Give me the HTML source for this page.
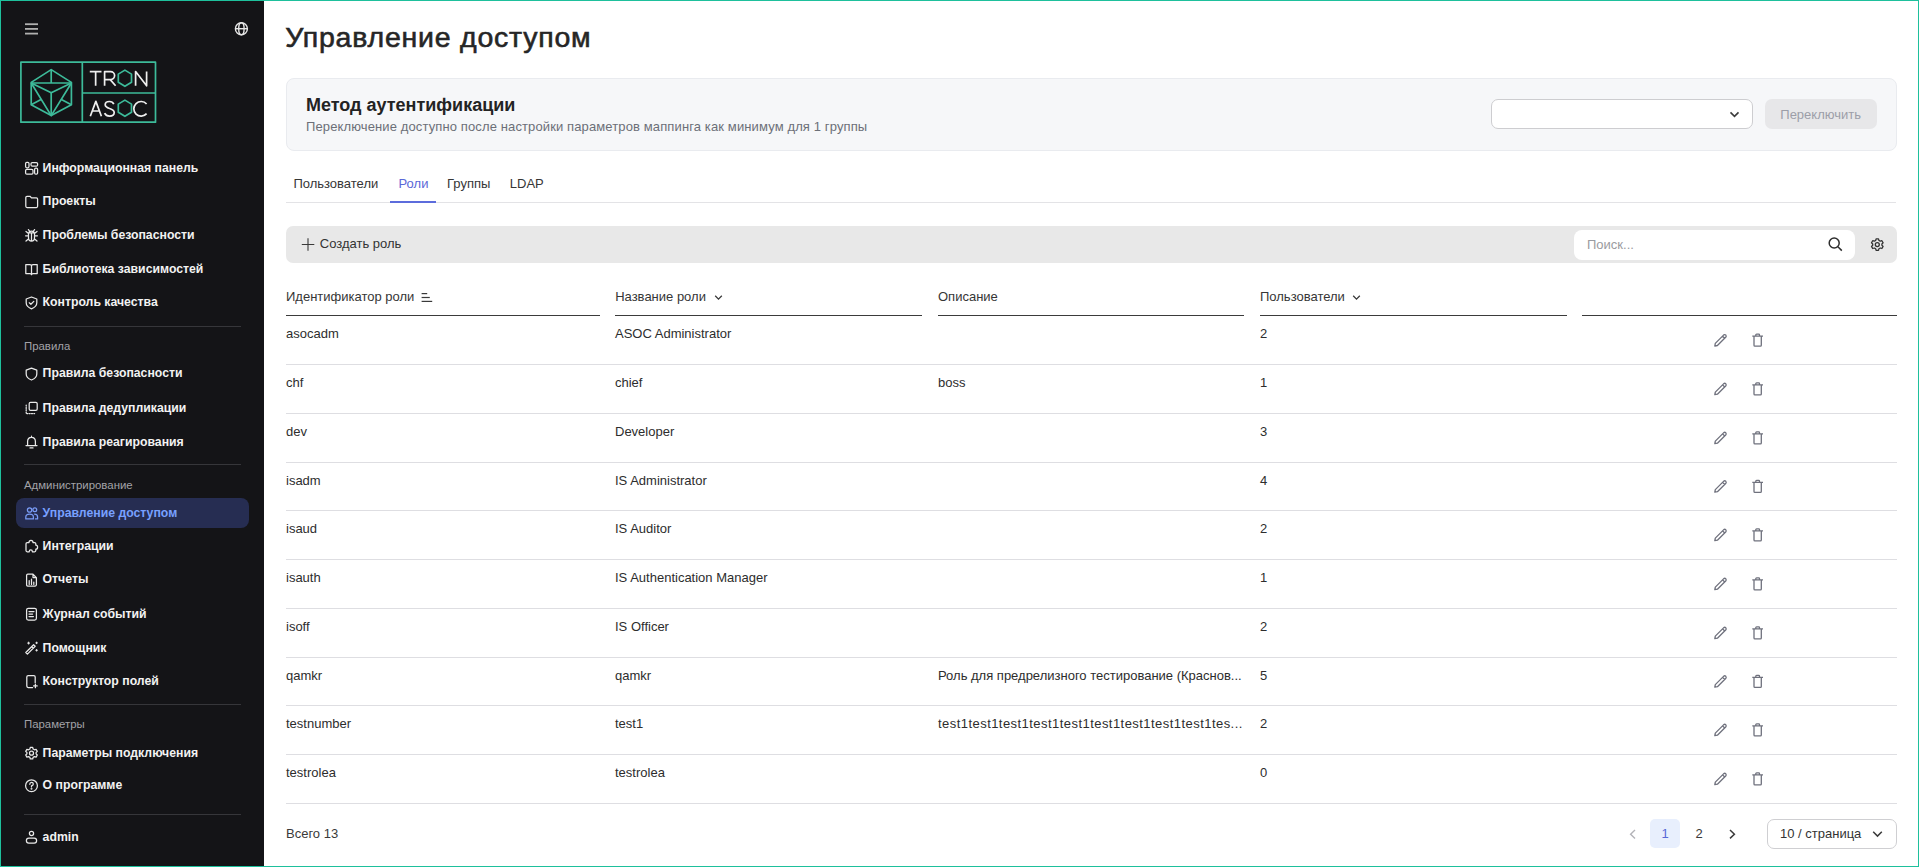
<!DOCTYPE html><html><head><meta charset="utf-8"><title>Управление доступом</title><style>
*{margin:0;padding:0;box-sizing:border-box}
html,body{width:1919px;height:867px;overflow:hidden;background:#fff;font-family:"Liberation Sans", sans-serif}
.t{position:absolute;white-space:nowrap;line-height:1}
.a{position:absolute}
svg.o{position:absolute;left:0;top:0;overflow:visible}
</style></head><body>
<div class="a" style="left:0;top:0;width:264px;height:867px;background:#141417"></div>
<div class="a" style="left:16px;top:498px;width:233px;height:30px;border-radius:8px;background:#262d52"></div>
<div class="a" style="left:24px;top:326px;width:217px;height:1px;background:#36363a"></div>
<div class="a" style="left:24px;top:464px;width:217px;height:1px;background:#36363a"></div>
<div class="a" style="left:24px;top:704px;width:217px;height:1px;background:#36363a"></div>
<div class="a" style="left:24px;top:814px;width:217px;height:1px;background:#36363a"></div>
<div class="t" style="left:24px;top:340.55px;font-size:11.4px;color:#a3a3a8;font-weight:normal;">Правила</div>
<div class="t" style="left:24px;top:479.65px;font-size:11.4px;color:#a3a3a8;font-weight:normal;">Администрирование</div>
<div class="t" style="left:24px;top:719.15px;font-size:11.4px;color:#a3a3a8;font-weight:normal;">Параметры</div>
<div class="t" style="left:42.6px;top:161.83px;font-size:12.25px;color:#f2f2f2;font-weight:bold;">Информационная панель</div>
<div class="t" style="left:42.6px;top:195.33px;font-size:12.25px;color:#f2f2f2;font-weight:bold;">Проекты</div>
<div class="t" style="left:42.6px;top:228.83px;font-size:12.25px;color:#f2f2f2;font-weight:bold;">Проблемы безопасности</div>
<div class="t" style="left:42.6px;top:262.53px;font-size:12.25px;color:#f2f2f2;font-weight:bold;">Библиотека зависимостей</div>
<div class="t" style="left:42.6px;top:296.23px;font-size:12.25px;color:#f2f2f2;font-weight:bold;">Контроль качества</div>
<div class="t" style="left:42.6px;top:367.43px;font-size:12.25px;color:#f2f2f2;font-weight:bold;">Правила безопасности</div>
<div class="t" style="left:42.6px;top:401.63px;font-size:12.25px;color:#f2f2f2;font-weight:bold;">Правила дедупликации</div>
<div class="t" style="left:42.6px;top:435.63px;font-size:12.25px;color:#f2f2f2;font-weight:bold;">Правила реагирования</div>
<div class="t" style="left:42.6px;top:506.83px;font-size:12.25px;color:#78a0ff;font-weight:bold;">Управление доступом</div>
<div class="t" style="left:42.6px;top:539.63px;font-size:12.25px;color:#f2f2f2;font-weight:bold;">Интеграции</div>
<div class="t" style="left:42.6px;top:573.43px;font-size:12.25px;color:#f2f2f2;font-weight:bold;">Отчеты</div>
<div class="t" style="left:42.6px;top:607.53px;font-size:12.25px;color:#f2f2f2;font-weight:bold;">Журнал событий</div>
<div class="t" style="left:42.6px;top:641.53px;font-size:12.25px;color:#f2f2f2;font-weight:bold;">Помощник</div>
<div class="t" style="left:42.6px;top:674.93px;font-size:12.25px;color:#f2f2f2;font-weight:bold;">Конструктор полей</div>
<div class="t" style="left:42.6px;top:746.63px;font-size:12.25px;color:#f2f2f2;font-weight:bold;">Параметры подключения</div>
<div class="t" style="left:42.6px;top:779.13px;font-size:12.25px;color:#f2f2f2;font-weight:bold;">О программе</div>
<div class="t" style="left:42.6px;top:830.83px;font-size:12.25px;color:#f2f2f2;font-weight:bold;">admin</div>
<svg class="o" width="1" height="1"><g stroke="#b0b0b0" stroke-width="1.8"><line x1="25" y1="24.2" x2="38" y2="24.2"/><line x1="25" y1="28.9" x2="38" y2="28.9"/><line x1="25" y1="33.6" x2="38" y2="33.6"/></g><g stroke="#e6e6e6" stroke-width="1.4" fill="none"><circle cx="241.4" cy="28.7" r="6"/><ellipse cx="241.4" cy="28.7" rx="2.7" ry="6"/><line x1="235.4" y1="28.7" x2="247.4" y2="28.7"/></g><g stroke="#3dbb9a" stroke-width="1.7" fill="none" stroke-linejoin="round">
<rect x="20.9" y="62.2" width="134.6" height="60"/>
<line x1="82.3" y1="62.2" x2="82.3" y2="122.2"/>
<line x1="82.3" y1="93" x2="155.5" y2="93"/>
<polygon points="51.2,69.6 71.4,82.4 71.4,104.8 51.2,115.6 31.2,104.8 31.2,82.4"/>
<line x1="51.2" y1="69.6" x2="51.2" y2="83"/>
<line x1="31.2" y1="83" x2="71.4" y2="83"/>
<polyline points="31.2,83 51.2,92.8 71.4,83"/>
<line x1="51.2" y1="92.8" x2="51.2" y2="115.6"/>
<polyline points="31.2,83 51.2,115.6 71.4,83"/>
<line x1="31.2" y1="104.8" x2="41" y2="99.4"/>
<line x1="71.4" y1="104.8" x2="61.4" y2="99.4"/>
<polygon points="124.9,70.10000000000001 131.5,74.15 131.5,82.25 124.9,86.3 118.30000000000001,82.25 118.30000000000001,74.15"/>
<polygon points="124.9,100.10000000000001 131.5,104.15 131.5,112.25 124.9,116.3 118.30000000000001,112.25 118.30000000000001,104.15"/>
</g>
<g stroke="#efefef" stroke-width="1.7" fill="none" stroke-linejoin="round">
<path d="M89.8,71.6 H101.5 M95.65,71.6 V85.8"/>
<path d="M104.6,85.8 V71.6 H110.6 A4,4 0 0 1 110.6,79.6 H104.6 M110.2,79.6 L115.6,85.8"/>
<path d="M135.6,85.8 V71.6 L146.6,85.8 V71.6"/>
<path d="M90.3,116.2 L95.85,101.4 L101.4,116.2 M92.3,111 H99.4"/>
<path d="M113.8,104.2 C113,102.4 111.4,101.5 109.4,101.5 C106.8,101.5 105.2,102.9 105.2,104.8 C105.2,107 107.4,107.8 109.6,108.5 C112,109.2 114.2,110.2 114.2,112.6 C114.2,114.8 112.2,116.2 109.6,116.2 C107.2,116.2 105.4,115 104.6,113.2"/>
<path d="M146.6,104 A7.3,7.3 0 1 0 146.6,113.6"/>
</g><g transform="translate(25,161.8)" stroke="#e9e9e9" stroke-width="1.25" fill="none" stroke-linecap="round" stroke-linejoin="round"><rect x="0.6" y="0.6" width="3.4" height="5.4" rx="1.2"/><rect x="6" y="0.8" width="6.6" height="3.6" rx="1.2"/><rect x="0.6" y="7.6" width="7.4" height="4.8" rx="1.2"/><rect x="9.6" y="6.4" width="3" height="6" rx="1.2"/></g><g transform="translate(25,195.3)" stroke="#e9e9e9" stroke-width="1.25" fill="none" stroke-linecap="round" stroke-linejoin="round"><path d="M0.8,2.2 Q0.8,1 2,1 H5 L6.5,2.6 H11.4 Q12.6,2.6 12.6,3.8 V11 Q12.6,12.2 11.4,12.2 H2 Q0.8,12.2 0.8,11 Z"/></g><g transform="translate(25,228.8)" stroke="#e9e9e9" stroke-width="1.25" fill="none" stroke-linecap="round" stroke-linejoin="round"><path d="M4,3.5 Q6.5,1 9,3.5 M3.5,4 H9.5 V9 Q9.5,12.4 6.5,12.4 Q3.5,12.4 3.5,9 Z M6.5,4 V12.4 M3.5,7 H0.6 M9.5,7 H12.4 M3.6,4.6 L1,2.6 M9.4,4.6 L12,2.6 M3.7,10 L1,12.2 M9.3,10 L12,12.2 M4.6,2.4 L3.4,0.8 M8.4,2.4 L9.6,0.8"/></g><g transform="translate(25,262.5)" stroke="#e9e9e9" stroke-width="1.25" fill="none" stroke-linecap="round" stroke-linejoin="round"><path d="M0.8,2 H5 Q6.5,2 6.5,3.5 V12.2 Q6.5,11 5,11 H0.8 Z M12.2,2 H8 Q6.5,2 6.5,3.5 M12.2,2 V11 H8 Q6.5,11 6.5,12.2"/></g><g transform="translate(25,296.2)" stroke="#e9e9e9" stroke-width="1.25" fill="none" stroke-linecap="round" stroke-linejoin="round"><path d="M6.5,0.8 L11.8,2.8 V6.6 Q11.8,10.6 6.5,12.6 Q1.2,10.6 1.2,6.6 V2.8 Z"/><path d="M4.3,6.6 L5.9,8.1 L8.8,5.2"/></g><g transform="translate(25,367.4)" stroke="#e9e9e9" stroke-width="1.25" fill="none" stroke-linecap="round" stroke-linejoin="round"><path d="M6.5,0.8 L11.8,2.8 V6.6 Q11.8,10.6 6.5,12.6 Q1.2,10.6 1.2,6.6 V2.8 Z"/></g><g transform="translate(25,401.6)" stroke="#e9e9e9" stroke-width="1.25" fill="none" stroke-linecap="round" stroke-linejoin="round"><rect x="4.2" y="0.8" width="8" height="8" rx="1.3"/><path d="M1.2,3.5 V12 H9.6" stroke-dasharray="1 1.3"/></g><g transform="translate(25,435.6)" stroke="#e9e9e9" stroke-width="1.25" fill="none" stroke-linecap="round" stroke-linejoin="round"><path d="M2.6,9.8 V6 Q2.6,1.8 6.5,1.8 Q10.4,1.8 10.4,6 V9.8 M1,10 H12 M5,12.3 H8 M6.5,0.6 V1.8"/></g><g transform="translate(25,506.8)" stroke="#7a9cf5" stroke-width="1.25" fill="none" stroke-linecap="round" stroke-linejoin="round"><circle cx="4.6" cy="3.2" r="2.2"/><path d="M0.8,12.2 V10.4 Q0.8,7.4 4.6,7.4 Q8.4,7.4 8.4,10.4 V12.2 Z"/><circle cx="9.8" cy="3" r="1.9"/><path d="M9.6,7.3 Q12.6,7.4 12.6,10.2 V12.2 H10.4"/></g><g transform="translate(25,539.6)" stroke="#e9e9e9" stroke-width="1.25" fill="none" stroke-linecap="round" stroke-linejoin="round"><path d="M1,4.2 Q1,3 2.2,3 H4 Q4,0.8 6,0.8 Q8,0.8 8,3 H9.6 Q10.8,3 10.8,4.2 V5.6 Q12.6,5.6 12.6,7.6 Q12.6,9.6 10.8,9.6 V11 Q10.8,12.2 9.6,12.2 H7.4 Q7.4,10.4 5.8,10.4 Q4.2,10.4 4.2,12.2 H2.2 Q1,12.2 1,11 Z"/></g><g transform="translate(25,573.4)" stroke="#e9e9e9" stroke-width="1.25" fill="none" stroke-linecap="round" stroke-linejoin="round"><path d="M1.6,2 Q1.6,0.8 2.8,0.8 H8 L11.4,4.2 V11.4 Q11.4,12.6 10.2,12.6 H2.8 Q1.6,12.6 1.6,11.4 Z M4.2,11 V7.2 M6.5,11 V5.6 M8.8,11 V8.6 M8,0.8 V4.2 H11.4"/></g><g transform="translate(25,607.5)" stroke="#e9e9e9" stroke-width="1.25" fill="none" stroke-linecap="round" stroke-linejoin="round"><rect x="1.6" y="0.8" width="9.8" height="11.8" rx="1.8"/><path d="M4,4 H9 M4,6.5 H7.6 M4,9 H8.4"/></g><g transform="translate(25,641.5)" stroke="#e9e9e9" stroke-width="1.25" fill="none" stroke-linecap="round" stroke-linejoin="round"><path d="M0.8,11 L8.6,3.2 L10.2,4.8 L2.4,12.6 Z M6.6,5.2 L8.2,6.8" /><path d="M3.6,0.6 V2.6 M2.6,1.6 H4.6 M11.6,0.6 V2.2 M10.8,1.4 H12.4 M11.6,8 V9.6 M10.8,8.8 H12.4" stroke-width="1"/></g><g transform="translate(25,674.9)" stroke="#e9e9e9" stroke-width="1.25" fill="none" stroke-linecap="round" stroke-linejoin="round"><path d="M10.2,7.8 V2.2 Q10.2,0.8 8.8,0.8 H3.2 Q1.8,0.8 1.8,2.2 V11.2 Q1.8,12.6 3.2,12.6 H7.6"/><path d="M10.4,9.2 V12.8 M8.6,11 H12.2" stroke-width="1.3"/></g><g transform="translate(25,746.6)" stroke="#e9e9e9" stroke-width="1.25" fill="none" stroke-linecap="round" stroke-linejoin="round"><circle cx="6.5" cy="6.6" r="2"/><path d="M5.3,0.8 H7.7 L8.1,2.4 L9.5,3.2 L11.1,2.7 L12.3,4.8 L11.1,5.9 V7.3 L12.3,8.4 L11.1,10.5 L9.5,10 L8.1,10.8 L7.7,12.4 H5.3 L4.9,10.8 L3.5,10 L1.9,10.5 L0.7,8.4 L1.9,7.3 V5.9 L0.7,4.8 L1.9,2.7 L3.5,3.2 L4.9,2.4 Z"/></g><g transform="translate(25,779.1)" stroke="#e9e9e9" stroke-width="1.25" fill="none" stroke-linecap="round" stroke-linejoin="round"><circle cx="6.5" cy="6.6" r="5.9"/><path d="M4.8,5.2 Q4.8,3.3 6.5,3.3 Q8.3,3.3 8.3,5 Q8.3,6.2 6.5,6.8 V7.8"/><circle cx="6.5" cy="9.6" r="0.35" fill="#e9e9e9"/></g><g transform="translate(25,830.8)" stroke="#e9e9e9" stroke-width="1.25" fill="none" stroke-linecap="round" stroke-linejoin="round"><circle cx="6.5" cy="2.8" r="2.1"/><rect x="1.4" y="7.4" width="10.2" height="5" rx="2.4"/></g></svg>
<div class="t" style="left:285.2px;top:22.87px;font-size:28.5px;color:#262626;font-weight:normal;-webkit-text-stroke:0.6px #262626;letter-spacing:0.77px">Управление доступом</div>
<div class="a" style="left:286px;top:78px;width:1611px;height:73px;border-radius:8px;background:#f6f7f9;border:1px solid #e9ebef"></div>
<div class="t" style="left:306px;top:96.16px;font-size:18px;color:#232323;font-weight:bold;">Метод аутентификации</div>
<div class="t" style="left:306px;top:120.00px;font-size:13px;color:#6c6f78;font-weight:normal;letter-spacing:0.12px">Переключение доступно после настройки параметров маппинга как минимум для 1 группы</div>
<div class="a" style="left:1491px;top:99px;width:262px;height:30px;border-radius:7px;background:#fff;border:1px solid #cdcdd0"></div>
<div class="a" style="left:1765px;top:99px;width:112px;height:30px;border-radius:7px;background:#e7e7e9"></div>
<div class="t" style="left:1780.3px;top:107.50px;font-size:13px;color:#9c9ea8;font-weight:normal;">Переключить</div>
<div class="a" style="left:286px;top:202px;width:1610px;height:1px;background:#e3e3e6"></div>
<div class="a" style="left:390px;top:201px;width:46px;height:2px;background:#5c6cdc"></div>
<div class="t" style="left:293.4px;top:177.00px;font-size:13px;color:#363636;font-weight:normal;">Пользователи</div>
<div class="t" style="left:398.5px;top:177.00px;font-size:13px;color:#5b68d8;font-weight:normal;">Роли</div>
<div class="t" style="left:447px;top:177.00px;font-size:13px;color:#363636;font-weight:normal;">Группы</div>
<div class="t" style="left:509.8px;top:177.00px;font-size:13px;color:#363636;font-weight:normal;">LDAP</div>
<div class="a" style="left:286px;top:226px;width:1611px;height:37px;border-radius:7px;background:#e8e8e8"></div>
<div class="t" style="left:319.8px;top:236.90px;font-size:13px;color:#333;font-weight:normal;">Создать роль</div>
<div class="a" style="left:1574px;top:230px;width:281px;height:30px;border-radius:8px;background:#fff"></div>
<div class="t" style="left:1587px;top:237.60px;font-size:13px;color:#9a9ba0;font-weight:normal;">Поиск...</div>
<div class="a" style="left:286px;top:314.5px;width:314px;height:1.6px;background:#3b3b3b"></div>
<div class="a" style="left:615px;top:314.5px;width:307px;height:1.6px;background:#3b3b3b"></div>
<div class="a" style="left:938px;top:314.5px;width:306px;height:1.6px;background:#3b3b3b"></div>
<div class="a" style="left:1260px;top:314.5px;width:307px;height:1.6px;background:#3b3b3b"></div>
<div class="a" style="left:1582px;top:314.5px;width:315px;height:1.6px;background:#3b3b3b"></div>
<div class="t" style="left:286px;top:289.80px;font-size:13px;color:#363636;font-weight:normal;">Идентификатор роли</div>
<div class="t" style="left:615.2px;top:289.80px;font-size:13px;color:#363636;font-weight:normal;">Название роли</div>
<div class="t" style="left:938px;top:289.80px;font-size:13px;color:#363636;font-weight:normal;">Описание</div>
<div class="t" style="left:1260px;top:289.80px;font-size:13px;color:#363636;font-weight:normal;">Пользователи</div>
<div class="t" style="left:286px;top:327.20px;font-size:13px;color:#2d2d2d;font-weight:normal;">asocadm</div>
<div class="t" style="left:615px;top:327.20px;font-size:13px;color:#2d2d2d;font-weight:normal;">ASOC Administrator</div>
<div class="t" style="left:1260px;top:327.20px;font-size:13px;color:#2d2d2d;font-weight:normal;">2</div>
<div class="a" style="left:286px;top:364.0px;width:1611px;height:1px;background:#dedee2"></div>
<div class="t" style="left:286px;top:375.60px;font-size:13px;color:#2d2d2d;font-weight:normal;">chf</div>
<div class="t" style="left:615px;top:375.60px;font-size:13px;color:#2d2d2d;font-weight:normal;">chief</div>
<div class="t" style="left:938px;top:375.60px;font-size:13px;color:#2d2d2d;font-weight:normal;">boss</div>
<div class="t" style="left:1260px;top:375.60px;font-size:13px;color:#2d2d2d;font-weight:normal;">1</div>
<div class="a" style="left:286px;top:413.0px;width:1611px;height:1px;background:#dedee2"></div>
<div class="t" style="left:286px;top:424.60px;font-size:13px;color:#2d2d2d;font-weight:normal;">dev</div>
<div class="t" style="left:615px;top:424.60px;font-size:13px;color:#2d2d2d;font-weight:normal;">Developer</div>
<div class="t" style="left:1260px;top:424.60px;font-size:13px;color:#2d2d2d;font-weight:normal;">3</div>
<div class="a" style="left:286px;top:462.0px;width:1611px;height:1px;background:#dedee2"></div>
<div class="t" style="left:286px;top:473.60px;font-size:13px;color:#2d2d2d;font-weight:normal;">isadm</div>
<div class="t" style="left:615px;top:473.60px;font-size:13px;color:#2d2d2d;font-weight:normal;">IS Administrator</div>
<div class="t" style="left:1260px;top:473.60px;font-size:13px;color:#2d2d2d;font-weight:normal;">4</div>
<div class="a" style="left:286px;top:510.0px;width:1611px;height:1px;background:#dedee2"></div>
<div class="t" style="left:286px;top:521.60px;font-size:13px;color:#2d2d2d;font-weight:normal;">isaud</div>
<div class="t" style="left:615px;top:521.60px;font-size:13px;color:#2d2d2d;font-weight:normal;">IS Auditor</div>
<div class="t" style="left:1260px;top:521.60px;font-size:13px;color:#2d2d2d;font-weight:normal;">2</div>
<div class="a" style="left:286px;top:559.0px;width:1611px;height:1px;background:#dedee2"></div>
<div class="t" style="left:286px;top:570.60px;font-size:13px;color:#2d2d2d;font-weight:normal;">isauth</div>
<div class="t" style="left:615px;top:570.60px;font-size:13px;color:#2d2d2d;font-weight:normal;">IS Authentication Manager</div>
<div class="t" style="left:1260px;top:570.60px;font-size:13px;color:#2d2d2d;font-weight:normal;">1</div>
<div class="a" style="left:286px;top:608.0px;width:1611px;height:1px;background:#dedee2"></div>
<div class="t" style="left:286px;top:619.60px;font-size:13px;color:#2d2d2d;font-weight:normal;">isoff</div>
<div class="t" style="left:615px;top:619.60px;font-size:13px;color:#2d2d2d;font-weight:normal;">IS Officer</div>
<div class="t" style="left:1260px;top:619.60px;font-size:13px;color:#2d2d2d;font-weight:normal;">2</div>
<div class="a" style="left:286px;top:657.0px;width:1611px;height:1px;background:#dedee2"></div>
<div class="t" style="left:286px;top:668.60px;font-size:13px;color:#2d2d2d;font-weight:normal;">qamkr</div>
<div class="t" style="left:615px;top:668.60px;font-size:13px;color:#2d2d2d;font-weight:normal;">qamkr</div>
<div class="t" style="left:938px;top:668.60px;font-size:13px;color:#2d2d2d;font-weight:normal;">Роль для предрелизного тестирование (Краснов...</div>
<div class="t" style="left:1260px;top:668.60px;font-size:13px;color:#2d2d2d;font-weight:normal;">5</div>
<div class="a" style="left:286px;top:705.0px;width:1611px;height:1px;background:#dedee2"></div>
<div class="t" style="left:286px;top:716.60px;font-size:13px;color:#2d2d2d;font-weight:normal;">testnumber</div>
<div class="t" style="left:615px;top:716.60px;font-size:13px;color:#2d2d2d;font-weight:normal;">test1</div>
<div class="t" style="left:938px;top:716.60px;font-size:13px;color:#2d2d2d;font-weight:normal;letter-spacing:0.45px">test1test1test1test1test1test1test1test1test1tes...</div>
<div class="t" style="left:1260px;top:716.60px;font-size:13px;color:#2d2d2d;font-weight:normal;">2</div>
<div class="a" style="left:286px;top:754.0px;width:1611px;height:1px;background:#dedee2"></div>
<div class="t" style="left:286px;top:765.60px;font-size:13px;color:#2d2d2d;font-weight:normal;">testrolea</div>
<div class="t" style="left:615px;top:765.60px;font-size:13px;color:#2d2d2d;font-weight:normal;">testrolea</div>
<div class="t" style="left:1260px;top:765.60px;font-size:13px;color:#2d2d2d;font-weight:normal;">0</div>
<div class="a" style="left:286px;top:803.0px;width:1611px;height:1px;background:#dedee2"></div>
<div class="t" style="left:286px;top:826.50px;font-size:13px;color:#3a3a3a;font-weight:normal;">Всего 13</div>
<div class="a" style="left:1650px;top:819px;width:30px;height:29px;border-radius:5px;background:#e8effd"></div>
<div class="t" style="left:1650px;top:826.5px;width:30px;text-align:center;font-size:13px;color:#5869d6">1</div>
<div class="t" style="left:1684px;top:826.5px;width:30px;text-align:center;font-size:13px;color:#3a3a3a">2</div>
<div class="a" style="left:1767px;top:819px;width:130px;height:30px;border-radius:7px;background:#fff;border:1px solid #cfcfd2"></div>
<div class="t" style="left:1780px;top:827.00px;font-size:13px;color:#333;font-weight:normal;">10 / страница</div>
<svg class="o" width="1" height="1"><path d="M1730.5,112.4 L1734.5,116.4 L1738.5,112.4" stroke="#3c3c3c" stroke-width="1.6" fill="none"/><path d="M308,238.2 V250.7 M301.8,244.5 H314.3" stroke="#3a3a3a" stroke-width="1.1" fill="none"/><g stroke="#2e2e2e" stroke-width="1.5" fill="none"><circle cx="1834.2" cy="243" r="5"/><line x1="1837.9" y1="246.7" x2="1841.8" y2="250.6"/></g><g transform="translate(1870.8,238.1)" stroke="#333" stroke-width="1.3" fill="none" stroke-linejoin="round"><circle cx="6.5" cy="6.5" r="2"/><path d="M5.3,0.7 H7.7 L8.1,2.3 L9.5,3.1 L11.1,2.6 L12.3,4.7 L11.1,5.8 V7.2 L12.3,8.3 L11.1,10.4 L9.5,9.9 L8.1,10.7 L7.7,12.3 H5.3 L4.9,10.7 L3.5,9.9 L1.9,10.4 L0.7,8.3 L1.9,7.2 V5.8 L0.7,4.7 L1.9,2.6 L3.5,3.1 L4.9,2.3 Z"/></g><g stroke="#3a3a3a" stroke-width="1.2"><line x1="421.6" y1="293.6" x2="427.2" y2="293.6"/><line x1="421.6" y1="297.5" x2="429.8" y2="297.5"/><line x1="421.6" y1="301.4" x2="432.2" y2="301.4"/></g><path d="M715.2,295.8 L718.5,299.1 L721.8,295.8" stroke="#3a3a3a" stroke-width="1.3" fill="none"/><path d="M1353.2,295.8 L1356.5,299.1 L1359.8,295.8" stroke="#3a3a3a" stroke-width="1.3" fill="none"/><g transform="translate(1713.8,333.8)" stroke="#6f717d" stroke-width="1.3" fill="none" stroke-linejoin="round"><path d="M1,12.2 L1.5,9.6 L10,1.1 Q11,0.4 12,1.3 Q12.8,2.3 12.1,3.2 L3.6,11.7 Z M8.8,2.4 L10.9,4.5"/></g><g transform="translate(1752,333.6)" stroke="#6f717d" stroke-width="1.3" fill="none" stroke-linejoin="round"><path d="M0.3,2.6 H11 M2,2.6 V11.6 Q2,12.5 2.9,12.5 H8.4 Q9.3,12.5 9.3,11.6 V2.6 M3.8,2.6 V1.4 Q3.8,0.6 4.6,0.6 H6.7 Q7.5,0.6 7.5,1.4 V2.6"/></g><g transform="translate(1713.8,382.5)" stroke="#6f717d" stroke-width="1.3" fill="none" stroke-linejoin="round"><path d="M1,12.2 L1.5,9.6 L10,1.1 Q11,0.4 12,1.3 Q12.8,2.3 12.1,3.2 L3.6,11.7 Z M8.8,2.4 L10.9,4.5"/></g><g transform="translate(1752,382.3)" stroke="#6f717d" stroke-width="1.3" fill="none" stroke-linejoin="round"><path d="M0.3,2.6 H11 M2,2.6 V11.6 Q2,12.5 2.9,12.5 H8.4 Q9.3,12.5 9.3,11.6 V2.6 M3.8,2.6 V1.4 Q3.8,0.6 4.6,0.6 H6.7 Q7.5,0.6 7.5,1.4 V2.6"/></g><g transform="translate(1713.8,431.5)" stroke="#6f717d" stroke-width="1.3" fill="none" stroke-linejoin="round"><path d="M1,12.2 L1.5,9.6 L10,1.1 Q11,0.4 12,1.3 Q12.8,2.3 12.1,3.2 L3.6,11.7 Z M8.8,2.4 L10.9,4.5"/></g><g transform="translate(1752,431.3)" stroke="#6f717d" stroke-width="1.3" fill="none" stroke-linejoin="round"><path d="M0.3,2.6 H11 M2,2.6 V11.6 Q2,12.5 2.9,12.5 H8.4 Q9.3,12.5 9.3,11.6 V2.6 M3.8,2.6 V1.4 Q3.8,0.6 4.6,0.6 H6.7 Q7.5,0.6 7.5,1.4 V2.6"/></g><g transform="translate(1713.8,480.0)" stroke="#6f717d" stroke-width="1.3" fill="none" stroke-linejoin="round"><path d="M1,12.2 L1.5,9.6 L10,1.1 Q11,0.4 12,1.3 Q12.8,2.3 12.1,3.2 L3.6,11.7 Z M8.8,2.4 L10.9,4.5"/></g><g transform="translate(1752,479.8)" stroke="#6f717d" stroke-width="1.3" fill="none" stroke-linejoin="round"><path d="M0.3,2.6 H11 M2,2.6 V11.6 Q2,12.5 2.9,12.5 H8.4 Q9.3,12.5 9.3,11.6 V2.6 M3.8,2.6 V1.4 Q3.8,0.6 4.6,0.6 H6.7 Q7.5,0.6 7.5,1.4 V2.6"/></g><g transform="translate(1713.8,528.5)" stroke="#6f717d" stroke-width="1.3" fill="none" stroke-linejoin="round"><path d="M1,12.2 L1.5,9.6 L10,1.1 Q11,0.4 12,1.3 Q12.8,2.3 12.1,3.2 L3.6,11.7 Z M8.8,2.4 L10.9,4.5"/></g><g transform="translate(1752,528.3)" stroke="#6f717d" stroke-width="1.3" fill="none" stroke-linejoin="round"><path d="M0.3,2.6 H11 M2,2.6 V11.6 Q2,12.5 2.9,12.5 H8.4 Q9.3,12.5 9.3,11.6 V2.6 M3.8,2.6 V1.4 Q3.8,0.6 4.6,0.6 H6.7 Q7.5,0.6 7.5,1.4 V2.6"/></g><g transform="translate(1713.8,577.5)" stroke="#6f717d" stroke-width="1.3" fill="none" stroke-linejoin="round"><path d="M1,12.2 L1.5,9.6 L10,1.1 Q11,0.4 12,1.3 Q12.8,2.3 12.1,3.2 L3.6,11.7 Z M8.8,2.4 L10.9,4.5"/></g><g transform="translate(1752,577.3)" stroke="#6f717d" stroke-width="1.3" fill="none" stroke-linejoin="round"><path d="M0.3,2.6 H11 M2,2.6 V11.6 Q2,12.5 2.9,12.5 H8.4 Q9.3,12.5 9.3,11.6 V2.6 M3.8,2.6 V1.4 Q3.8,0.6 4.6,0.6 H6.7 Q7.5,0.6 7.5,1.4 V2.6"/></g><g transform="translate(1713.8,626.5)" stroke="#6f717d" stroke-width="1.3" fill="none" stroke-linejoin="round"><path d="M1,12.2 L1.5,9.6 L10,1.1 Q11,0.4 12,1.3 Q12.8,2.3 12.1,3.2 L3.6,11.7 Z M8.8,2.4 L10.9,4.5"/></g><g transform="translate(1752,626.3)" stroke="#6f717d" stroke-width="1.3" fill="none" stroke-linejoin="round"><path d="M0.3,2.6 H11 M2,2.6 V11.6 Q2,12.5 2.9,12.5 H8.4 Q9.3,12.5 9.3,11.6 V2.6 M3.8,2.6 V1.4 Q3.8,0.6 4.6,0.6 H6.7 Q7.5,0.6 7.5,1.4 V2.6"/></g><g transform="translate(1713.8,675.0)" stroke="#6f717d" stroke-width="1.3" fill="none" stroke-linejoin="round"><path d="M1,12.2 L1.5,9.6 L10,1.1 Q11,0.4 12,1.3 Q12.8,2.3 12.1,3.2 L3.6,11.7 Z M8.8,2.4 L10.9,4.5"/></g><g transform="translate(1752,674.8)" stroke="#6f717d" stroke-width="1.3" fill="none" stroke-linejoin="round"><path d="M0.3,2.6 H11 M2,2.6 V11.6 Q2,12.5 2.9,12.5 H8.4 Q9.3,12.5 9.3,11.6 V2.6 M3.8,2.6 V1.4 Q3.8,0.6 4.6,0.6 H6.7 Q7.5,0.6 7.5,1.4 V2.6"/></g><g transform="translate(1713.8,723.5)" stroke="#6f717d" stroke-width="1.3" fill="none" stroke-linejoin="round"><path d="M1,12.2 L1.5,9.6 L10,1.1 Q11,0.4 12,1.3 Q12.8,2.3 12.1,3.2 L3.6,11.7 Z M8.8,2.4 L10.9,4.5"/></g><g transform="translate(1752,723.3)" stroke="#6f717d" stroke-width="1.3" fill="none" stroke-linejoin="round"><path d="M0.3,2.6 H11 M2,2.6 V11.6 Q2,12.5 2.9,12.5 H8.4 Q9.3,12.5 9.3,11.6 V2.6 M3.8,2.6 V1.4 Q3.8,0.6 4.6,0.6 H6.7 Q7.5,0.6 7.5,1.4 V2.6"/></g><g transform="translate(1713.8,772.5)" stroke="#6f717d" stroke-width="1.3" fill="none" stroke-linejoin="round"><path d="M1,12.2 L1.5,9.6 L10,1.1 Q11,0.4 12,1.3 Q12.8,2.3 12.1,3.2 L3.6,11.7 Z M8.8,2.4 L10.9,4.5"/></g><g transform="translate(1752,772.3)" stroke="#6f717d" stroke-width="1.3" fill="none" stroke-linejoin="round"><path d="M0.3,2.6 H11 M2,2.6 V11.6 Q2,12.5 2.9,12.5 H8.4 Q9.3,12.5 9.3,11.6 V2.6 M3.8,2.6 V1.4 Q3.8,0.6 4.6,0.6 H6.7 Q7.5,0.6 7.5,1.4 V2.6"/></g><path d="M1635,830 L1630.6,834.2 L1635,838.4" stroke="#b3b3b8" stroke-width="1.4" fill="none"/><path d="M1730,830 L1734.4,834.2 L1730,838.4" stroke="#3a3a3a" stroke-width="1.5" fill="none"/><path d="M1873.2,831.8 L1877.5,836.1 L1881.8,831.8" stroke="#3a3a3a" stroke-width="1.5" fill="none"/></svg>
<div class="a" style="left:0;top:0;width:1919px;height:867px;border:1px solid #1ec09c;pointer-events:none"></div>
</body></html>
